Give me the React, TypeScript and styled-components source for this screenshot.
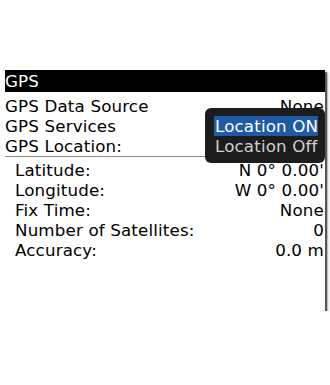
import React from "react";
import styled, { createGlobalStyle } from "styled-components";

const GlobalStyle = createGlobalStyle`
  html, body { margin: 0; padding: 0; background: #ffffff; }
`;

const Screen = styled.div`
  position: relative;
  margin: 70px 0 0 5px;
  width: 320px;
  height: 241px;
  background: #ffffff;
  overflow: hidden;
  box-shadow: 2px 2px 1px rgba(0, 0, 0, 0.55), 3px 3px 2px rgba(0, 0, 0, 0.25);
  font-family: "DejaVu Sans", "Liberation Sans", sans-serif;
  font-size: 16.7px;
  letter-spacing: 0.15px;
  color: #000;
`;

const TitleBar = styled.div`
  height: 22px;
  line-height: 22px;
  background: #000;
  color: #fff;
  padding-left: 0;
`;

const Section = styled.div<{ $top: number }>`
  padding-top: ${(p) => p.$top}px;
`;

const Row = styled.div<{ $indent?: number }>`
  display: flex;
  justify-content: space-between;
  height: 20px;
  line-height: 20px;
  padding-left: ${(p) => p.$indent ?? 0}px;
  padding-right: 1px;
  white-space: nowrap;
`;

const Divider = styled.div`
  height: 1px;
  background: #8a8a8a;
  margin-bottom: 3px;
`;

const Menu = styled.div`
  position: absolute;
  left: 200px;
  top: 38px;
  width: 111px;
  padding: 8px 0 7px 9px;
  background: #1c1c1c;
  border-radius: 6px;
`;

const MenuItem = styled.div<{ $selected?: boolean }>`
  display: inline-block;
  height: 20px;
  line-height: 20px;
  padding: 0 0 0 1px;
  color: ${(p) => (p.$selected ? "#ffffff" : "#d0d0d0")};
  background: ${(p) => (p.$selected ? "#1f5aa6" : "transparent")};
  white-space: nowrap;
`;

const MenuLine = styled.div`
  height: 20px;
`;

export default function App() {
  return (
    <>
      <GlobalStyle />
      <Screen>
        <TitleBar>GPS</TitleBar>
        <Section $top={4}>
          <Row>
            <span>GPS Data Source</span>
            <span>None</span>
          </Row>
          <Row>
            <span>GPS Services</span>
            <span></span>
          </Row>
          <Row>
            <span>GPS Location:</span>
            <span></span>
          </Row>
        </Section>
        <Divider />
        <Row $indent={10}>
          <span>Latitude:</span>
          <span>N 0° 0.00'</span>
        </Row>
        <Row $indent={10}>
          <span>Longitude:</span>
          <span>W 0° 0.00'</span>
        </Row>
        <Row $indent={10}>
          <span>Fix Time:</span>
          <span>None</span>
        </Row>
        <Row $indent={10}>
          <span>Number of Satellites:</span>
          <span>0</span>
        </Row>
        <Row $indent={10}>
          <span>Accuracy:</span>
          <span>0.0 m</span>
        </Row>
        <Menu>
          <MenuLine>
            <MenuItem $selected>Location ON</MenuItem>
          </MenuLine>
          <MenuLine>
            <MenuItem>Location Off</MenuItem>
          </MenuLine>
        </Menu>
      </Screen>
    </>
  );
}
